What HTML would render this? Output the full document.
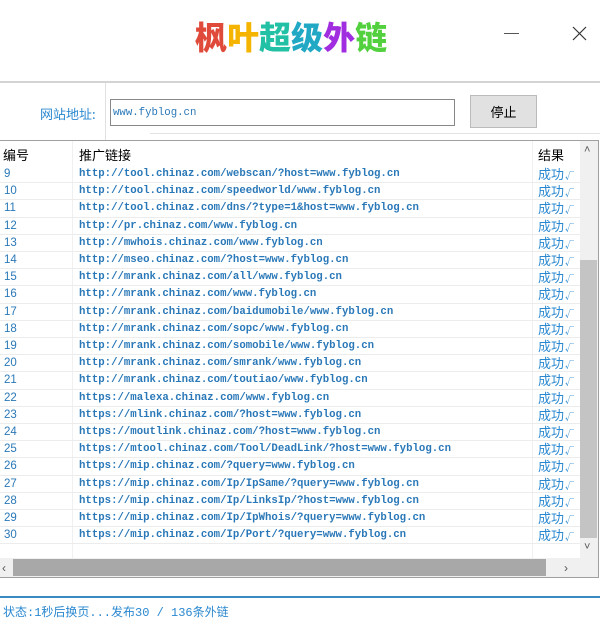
<!DOCTYPE html>
<html><head><meta charset="utf-8"><style>
*{margin:0;padding:0;box-sizing:border-box}
body{width:600px;height:633px;background:#fff;position:relative;overflow:hidden;font-family:"Liberation Sans","Noto Sans CJK SC",sans-serif}
.logo{position:absolute;left:195px;top:17px;font-size:32px;font-weight:900;letter-spacing:0;font-family:"Noto Sans CJK SC",sans-serif;line-height:38px;white-space:nowrap}
.abs{position:absolute}
.mono{font-family:"Liberation Mono","Noto Sans CJK SC",monospace;font-size:10.7px;color:#2a78b8;font-weight:bold}
.row{position:absolute;left:0;width:580px;height:17.2px;border-bottom:1px solid #ececec}
.row span{position:absolute;top:2px;line-height:13px}
.n{left:4px;font-family:"Liberation Sans",sans-serif;font-size:11.5px;color:#2a78b8;font-weight:normal}
.u{left:79px}
.r{left:538px;font-size:13px;color:#2a88d0;font-family:"Noto Sans CJK SC",sans-serif;top:0!important;line-height:16px!important;font-weight:normal}
.r i{font-style:normal;font-size:9px;margin-left:1px}
</style></head><body>
<div class="logo"><span style="color:#e04a3a">枫</span><span style="color:#f5b400">叶</span><span style="color:#22c0a4">超</span><span style="color:#20a8c4">级</span><span style="color:#a02ee0">外</span><span style="color:#52d03e">链</span></div>
<div class="abs" style="left:504px;top:33px;width:15px;height:1px;background:#555"></div>
<svg class="abs" style="left:572px;top:26px" width="15" height="15"><path d="M1 1L14 14M14 1L1 14" stroke="#333" stroke-width="1.2"/></svg>
<div class="abs" style="left:0;top:81px;width:600px;height:2px;background:#d4d4d4"></div>
<div class="abs" style="left:105px;top:83px;width:1px;height:57px;background:#e0e0e0"></div>
<div class="abs" style="left:40px;top:104px;font-size:13px;color:#2a88d0;font-family:'Noto Sans CJK SC',sans-serif">网站地址:</div>
<div class="abs mono" style="left:110px;top:99px;width:345px;height:27px;border:1px solid #888;padding:6px 2px;line-height:14px;font-weight:normal">www.fyblog.cn</div>
<div class="abs" style="left:470px;top:95px;width:67px;height:33px;border:1px solid #bbb;background:#e1e1e1;text-align:center;line-height:31px;font-size:13px;font-family:'Noto Sans CJK SC',sans-serif">停止</div>
<div class="abs" style="left:150px;top:133px;width:450px;height:1px;background:#e4e4e4"></div>
<div class="abs" style="left:0;top:140px;width:599px;height:438px;border:1px solid #a0a0a0;border-left:none"></div>
<div class="abs" style="left:0;top:143px;width:580px;height:23px;font-size:13px;font-family:'Noto Sans CJK SC',sans-serif">
<span class="abs" style="left:3px;top:2px">编号</span><span class="abs" style="left:79px;top:2px">推广链接</span><span class="abs" style="left:538px;top:2px">结果</span></div>
<div class="abs" style="left:72px;top:141px;width:1px;height:417px;background:#f0f0f0"></div>
<div class="abs" style="left:532px;top:141px;width:1px;height:417px;background:#f0f0f0"></div>
<div class="abs" style="left:580px;top:141px;width:18px;height:417px;background:#f0f0f0"></div>
<div class="abs" style="left:584px;top:144px;font-size:11px;color:#555">˄</div>
<div class="abs" style="left:580px;top:260px;width:17px;height:278px;background:#c4c4c4"></div>
<div class="abs" style="left:584px;top:541px;font-size:11px;color:#555">˅</div>
<div class="abs" style="left:0;top:558px;width:598px;height:19px;background:#f0f0f0"></div>
<div class="abs" style="left:2px;top:561px;font-size:12px;color:#555">‹</div>
<div class="abs" style="left:13px;top:559px;width:533px;height:17px;background:#a8a8a8"></div>
<div class="abs" style="left:564px;top:561px;font-size:12px;color:#555">›</div>
<div class="abs" style="left:0;top:596px;width:600px;height:2px;background:#3a8cc0"></div>
<div class="abs" style="left:3px;top:603px;font-size:12px;color:#2a88d0;font-family:'Liberation Mono','Noto Sans CJK SC',monospace">状态:1秒后换页...发布30 / 136条外链</div>
<div class="abs mono" style="left:0;top:166px">
<div class="row" style="top:0"><span class="n">9</span><span class="u">http://tool.chinaz.com/webscan/?host=www.fyblog.cn</span><span class="r">成功<i>√</i></span></div>
<div class="row" style="top:17.2px"><span class="n">10</span><span class="u">http://tool.chinaz.com/speedworld/www.fyblog.cn</span><span class="r">成功<i>√</i></span></div>
<div class="row" style="top:34.4px"><span class="n">11</span><span class="u">http://tool.chinaz.com/dns/?type=1&amp;host=www.fyblog.cn</span><span class="r">成功<i>√</i></span></div>
<div class="row" style="top:51.6px"><span class="n">12</span><span class="u">http://pr.chinaz.com/www.fyblog.cn</span><span class="r">成功<i>√</i></span></div>
<div class="row" style="top:68.8px"><span class="n">13</span><span class="u">http://mwhois.chinaz.com/www.fyblog.cn</span><span class="r">成功<i>√</i></span></div>
<div class="row" style="top:86px"><span class="n">14</span><span class="u">http://mseo.chinaz.com/?host=www.fyblog.cn</span><span class="r">成功<i>√</i></span></div>
<div class="row" style="top:103.2px"><span class="n">15</span><span class="u">http://mrank.chinaz.com/all/www.fyblog.cn</span><span class="r">成功<i>√</i></span></div>
<div class="row" style="top:120.4px"><span class="n">16</span><span class="u">http://mrank.chinaz.com/www.fyblog.cn</span><span class="r">成功<i>√</i></span></div>
<div class="row" style="top:137.6px"><span class="n">17</span><span class="u">http://mrank.chinaz.com/baidumobile/www.fyblog.cn</span><span class="r">成功<i>√</i></span></div>
<div class="row" style="top:154.8px"><span class="n">18</span><span class="u">http://mrank.chinaz.com/sopc/www.fyblog.cn</span><span class="r">成功<i>√</i></span></div>
<div class="row" style="top:172px"><span class="n">19</span><span class="u">http://mrank.chinaz.com/somobile/www.fyblog.cn</span><span class="r">成功<i>√</i></span></div>
<div class="row" style="top:189.2px"><span class="n">20</span><span class="u">http://mrank.chinaz.com/smrank/www.fyblog.cn</span><span class="r">成功<i>√</i></span></div>
<div class="row" style="top:206.4px"><span class="n">21</span><span class="u">http://mrank.chinaz.com/toutiao/www.fyblog.cn</span><span class="r">成功<i>√</i></span></div>
<div class="row" style="top:223.6px"><span class="n">22</span><span class="u">https://malexa.chinaz.com/www.fyblog.cn</span><span class="r">成功<i>√</i></span></div>
<div class="row" style="top:240.8px"><span class="n">23</span><span class="u">https://mlink.chinaz.com/?host=www.fyblog.cn</span><span class="r">成功<i>√</i></span></div>
<div class="row" style="top:258px"><span class="n">24</span><span class="u">https://moutlink.chinaz.com/?host=www.fyblog.cn</span><span class="r">成功<i>√</i></span></div>
<div class="row" style="top:275.2px"><span class="n">25</span><span class="u">https://mtool.chinaz.com/Tool/DeadLink/?host=www.fyblog.cn</span><span class="r">成功<i>√</i></span></div>
<div class="row" style="top:292.4px"><span class="n">26</span><span class="u">https://mip.chinaz.com/?query=www.fyblog.cn</span><span class="r">成功<i>√</i></span></div>
<div class="row" style="top:309.6px"><span class="n">27</span><span class="u">https://mip.chinaz.com/Ip/IpSame/?query=www.fyblog.cn</span><span class="r">成功<i>√</i></span></div>
<div class="row" style="top:326.8px"><span class="n">28</span><span class="u">https://mip.chinaz.com/Ip/LinksIp/?host=www.fyblog.cn</span><span class="r">成功<i>√</i></span></div>
<div class="row" style="top:344px"><span class="n">29</span><span class="u">https://mip.chinaz.com/Ip/IpWhois/?query=www.fyblog.cn</span><span class="r">成功<i>√</i></span></div>
<div class="row" style="top:361.2px"><span class="n">30</span><span class="u">https://mip.chinaz.com/Ip/Port/?query=www.fyblog.cn</span><span class="r">成功<i>√</i></span></div>
</div>
</body></html>
